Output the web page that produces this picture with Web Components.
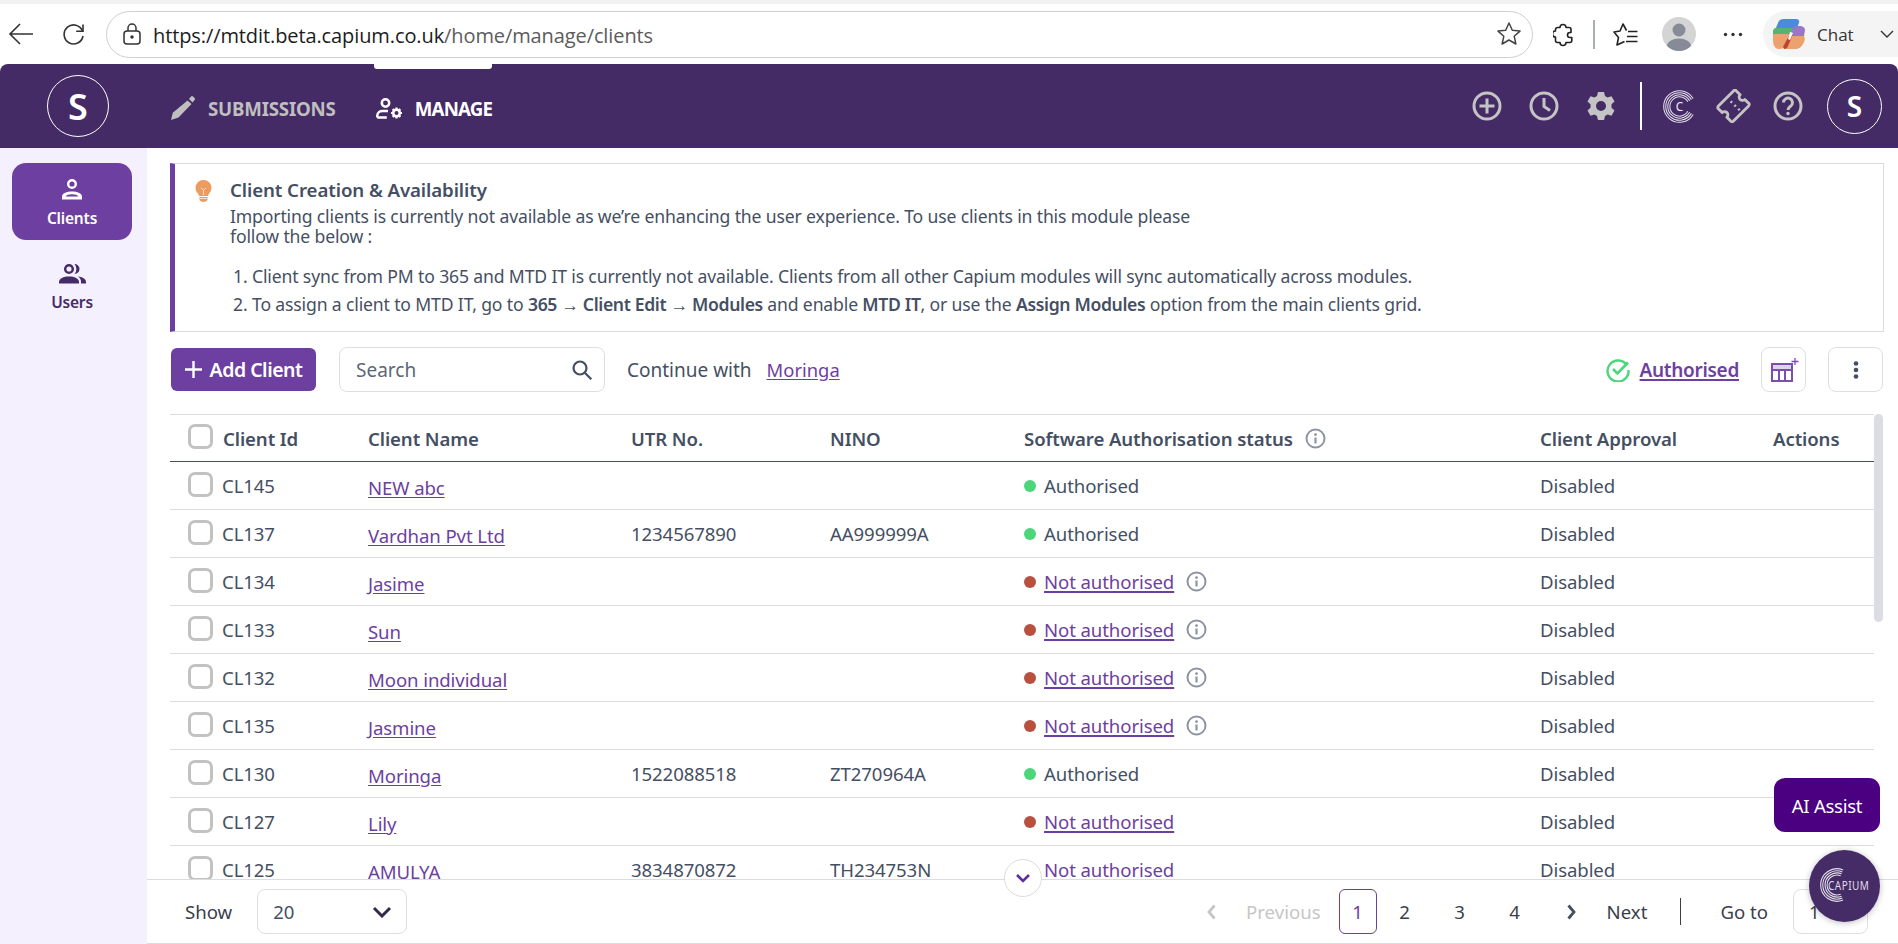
<!DOCTYPE html>
<html lang="en">
<head>
<meta charset="utf-8">
<title>Clients</title>
<style>
  html, body { margin: 0; height: 100%; overflow: hidden; background: #fff; }
  body { font-family: "Noto Sans", "Liberation Sans", sans-serif; color: #454f63; display: flex; flex-direction: column; position: relative; height: 944px; }
</style>
</head>
<body>
<browser-bar></browser-bar>
<app-header></app-header>
<app-main>
  <side-nav slot="side"></side-nav>
  <info-banner></info-banner>
  <client-toolbar></client-toolbar>
  <client-table>
    <client-row cid="CL145" status="ok">NEW abc</client-row>
    <client-row cid="CL137" utr="1234567890" nino="AA999999A" status="ok">Vardhan Pvt Ltd</client-row>
    <client-row cid="CL134" status="no" info>Jasime</client-row>
    <client-row cid="CL133" status="no" info>Sun</client-row>
    <client-row cid="CL132" status="no" info>Moon individual</client-row>
    <client-row cid="CL135" status="no" info>Jasmine</client-row>
    <client-row cid="CL130" utr="1522088518" nino="ZT270964A" status="ok">Moringa</client-row>
    <client-row cid="CL127" status="no">Lily</client-row>
    <client-row cid="CL125" utr="3834870872" nino="TH234753N" status="no">AMULYA</client-row>
  </client-table>
  <pager-bar slot="foot"></pager-bar>
</app-main>
<float-widgets></float-widgets>

<script>
// little shared icons
const infoIcon = `<svg width="21" height="21" viewBox="0 0 21 21" fill="none"><circle cx="10.5" cy="10.5" r="9" stroke="#8d95a5" stroke-width="2"/><circle cx="10.5" cy="6.6" r="1.4" fill="#8d95a5"/><path d="M10.5 9.5v6" stroke="#8d95a5" stroke-width="2.2"/></svg>`;

// concentric open rings of the capium mark, open = half opening of the gap in degrees
function capiumRings(w, h, open, inner) {
  const a = open * Math.PI / 180;
  const d = [23, 20, 17, 14].map(r => {
    const x = (24 + r * Math.cos(a)).toFixed(1);
    return `M${x} ${(24 - r * Math.sin(a)).toFixed(1)}A${r} ${r} 0 1 0 ${x} ${(24 + r * Math.sin(a)).toFixed(1)}`;
  }).join('');
  return `<svg width="${w}" height="${h}" viewBox="0 0 48 48" preserveAspectRatio="xMinYMid meet" fill="none" stroke="#e4e0ea" stroke-width="1.5"><path d="${d}"/>${inner || ''}</svg>`;
}

class BrowserBar extends HTMLElement {
  constructor() {
    super();
    this.attachShadow({ mode: 'open' }).innerHTML = `
    <style>
      :host { display: block; height: 64px; background: #fff; box-sizing: border-box; border-top: 4px solid #f1f1f1; font-family: "Open Sans", "Noto Sans", sans-serif; }
      .bar { display: flex; align-items: center; height: 60px; }
      .nav { display: flex; align-items: center; width: 106px; flex: none; }
      .nav svg:first-child { margin-left: 8px; }
      .nav svg:last-child { margin-left: 28px; }
      .url { flex: none; width: 1427px; height: 47px; box-sizing: border-box; border: 1.5px solid #cfcfcf; border-radius: 24px; display: flex; align-items: center; padding: 0 9px 0 15px; font-size: 20px; color: #5c5c5c; letter-spacing: -.1px; }
      .url span { position: relative; top: 1px; }
      .url b { font-weight: 400; color: #1c1c1c; }
      .url svg:first-child { margin-right: 11px; }
      .url svg:last-child { margin-left: auto; margin-right: 1px; }
      .tools { display: flex; align-items: center; flex: 1; position: relative; height: 47px; }
      .tools > * { position: absolute; }
      .chat { left: 230px; width: 135px; height: 46px; background: #f4f4f4; border-radius: 23px 0 0 23px; display: flex; align-items: center; font-size: 17px; color: #333; box-sizing: border-box; padding-left: 9px; }
      .chat span { margin-left: 11px; }
      .chat svg:last-child { margin-left: 26px; }
    </style>
    <div class="bar">
      <div class="nav">
        <svg width="26" height="24" viewBox="0 0 26 24" fill="none" stroke="#333" stroke-width="1.6"><path d="M25 12H2M12 2L2 12l10 10"/></svg>
        <svg width="24" height="24" viewBox="0 0 24 24" fill="none" stroke="#333" stroke-width="1.6"><path d="M20.5 9A9.5 9.5 0 1 0 21 14"/><path d="M21 2.5V9.3h-6.8"/></svg>
      </div>
      <div class="url">
        <svg width="20" height="24" viewBox="0 0 20 24" fill="none" stroke="#333" stroke-width="1.5"><rect x="2" y="9" width="16" height="13" rx="3"/><path d="M6 9V6a4 4 0 0 1 8 0v3"/><circle cx="10" cy="15" r="1" fill="#333"/></svg>
        <span><b>https://mtdit.beta.capium.co.uk</b>/home/manage/clients</span>
        <svg width="26" height="26" viewBox="0 0 26 26" fill="none" stroke="#444" stroke-width="1.5" stroke-linejoin="round"><path d="M13 2l3.3 7.3 7.7.8-5.8 5.2 1.7 7.7-6.9-4-6.9 4 1.7-7.7L2 10.1l7.7-.8z"/></svg>
      </div>
      <div class="tools">
        <svg style="left:20px;top:11px" width="20" height="25" viewBox="0 0 20 25" fill="none" stroke="#222" stroke-width="1.6" stroke-linejoin="round"><path d="M7 5.5a3 3 0 0 1 6 0h3a2 2 0 0 1 2 2v3h-1a2.4 2.4 0 0 0 0 5h1.800v3a2 2 0 0 1-2 2H13a3 3 0 0 1-6 0H4.500a2 2 0 0 1-2-2v-3.500a3 3 0 0 1 0-6V7.500a2 2 0 0 1 2-2z"/></svg>
        <div style="left:60px;top:9px;width:2px;height:29px;background:#a9adb6"></div>
        <svg style="left:80px;top:12px" width="25" height="24" viewBox="0 0 25 24" fill="none" stroke="#222" stroke-width="1.6" stroke-linejoin="round"><path d="M13.500 7.500L10 1 7 8l-6 1 4.500 5.500L4 22l7.500-3.500"/><path d="M15 8.500h9.500M14 13.500h10.500M13 18.500h11.500"/></svg>
        <svg style="left:129px;top:6px" width="34" height="34" viewBox="0 0 34 34"><clipPath id="av"><circle cx="17" cy="17" r="17"/></clipPath><g clip-path="url(#av)"><rect width="34" height="34" fill="#d4d4d4"/><circle cx="17" cy="13" r="6.500" fill="#868b97"/><ellipse cx="17" cy="29" rx="12" ry="7.500" fill="#868b97"/></g></svg>
        <svg style="left:190px;top:21px" width="20" height="5" viewBox="0 0 20 5" fill="#333"><circle cx="2.500" cy="2.500" r="1.700"/><circle cx="10" cy="2.500" r="1.700"/><circle cx="17.500" cy="2.500" r="1.700"/></svg>
        <div class="chat">
          <svg width="34" height="32" viewBox="0 0 34 32">
            <path d="M6 5Q7 1 12 1h12q4 0 3 4l-3 7H3z" fill="#4a8adf"/>
            <path d="M1 13q.5-3 3-3h19l-3 7H1z" fill="#58b46c"/>
            <path d="M1 16h16l-5 12q-1 3-4 3-4 0-5-2-2-2-2-6z" fill="#eba26e"/>
            <path d="M20 12q1-4 6-4h3q4 1 4 4l-1 6-13 1z" fill="#9877c8"/>
            <path d="M19 18h13q2 3-1 8-2 4-6 5H13z" fill="#eba26e"/>
            <path d="M18 15l3 1-5 12q-1 3-4 3l-1-2z" fill="#b8452f"/>
            <path d="M18 14l3 1-3 7-2-1z" fill="#fff"/>
          </svg>
          <span>Chat</span>
          <svg width="14" height="9" viewBox="0 0 14 9" fill="none" stroke="#333" stroke-width="1.4"><path d="M1 1l6 6 6-6"/></svg>
        </div>
      </div>
    </div>`;
  }
}
customElements.define('browser-bar', BrowserBar);

class AppHeader extends HTMLElement {
  constructor() {
    super();
    this.attachShadow({ mode: 'open' }).innerHTML = `
    <style>
      :host { display: flex; align-items: center; height: 84px; flex: none; background: #452b66; border-radius: 8px 8px 0 0; color: #fff; position: relative; }
      .logo { width: 62px; height: 62px; margin-left: 47px; border: 1.2px solid #fff; border-radius: 50%; box-sizing: border-box; display: flex; align-items: center; justify-content: center; font-size: 36px; font-weight: 600; flex: none; }
      nav { display: flex; align-items: center; margin-left: 61px; font-size: 18.7px; font-weight: 700; letter-spacing: -.2px; }
      .item { display: flex; align-items: center; position: relative; height: 84px; box-sizing: border-box; padding-top: 4px; }
      .item.off { color: #bfbfbf; margin-right: 40px; gap: 13px; }
      .item.on { gap: 12px; letter-spacing: -.8px; }
      .item.on::before { content: ""; position: absolute; left: -2px; right: 0; top: 0; height: 5px; background: #fff; border-radius: 0 0 3px 3px; }
      .right { margin-left: auto; display: flex; align-items: center; margin-right: 16px; }
      .right svg { flex: none; }
      .div { width: 2px; height: 48px; background: #fff; margin: 0 21px 0 24px; }
      .me { width: 55px; height: 55px; margin-left: 24px; border: 1.2px solid #fff; border-radius: 50%; box-sizing: border-box; display: flex; align-items: center; justify-content: center; font-size: 28px; font-weight: 600; }
    </style>
    <div class="logo">S</div>
    <nav>
      <div class="item off">
        <svg width="25" height="24" viewBox="0 0 25 24" fill="#bfbfbf"><path d="M17.500 4.500l4 3.600L8.500 21.500 1 24l1.800-7.200z"/><path d="M19 3l2-2.500q1-.8 2 0l1.600 1.500q.7 1 0 2L22.500 6.500z"/></svg>
        <span>SUBMISSIONS</span>
      </div>
      <div class="item on">
        <svg width="27" height="21" viewBox="0 0 27 21" fill="none"><circle cx="9.500" cy="5" r="3.700" stroke="#fff" stroke-width="2.500"/><path d="M1.300 19.500v-2c0-3 2.700-4.500 5.200-4.500h5.500M1.300 19.500h9.500" stroke="#fff" stroke-width="2.500"/><circle cx="20.500" cy="15" r="3.300" stroke="#fff" stroke-width="2.600"/><path d="M20.500 9.500v2M20.500 18.500v2M15 15h2M24 15h2M16.600 11.100l1.400 1.400M23 17.500l1.400 1.400M16.600 18.900l1.400-1.400M23 12.500l1.400-1.400" stroke="#fff" stroke-width="2.200"/></svg>
        <span>MANAGE</span>
      </div>
    </nav>
    <div class="right">
      <svg width="30" height="30" viewBox="0 0 30 30" fill="none" stroke="#c4c4c4" stroke-width="3" style="margin-right:27px"><circle cx="15" cy="15" r="13"/><path d="M15 7.500v15M7.500 15h15"/></svg>
      <svg width="30" height="30" viewBox="0 0 30 30" fill="none" stroke="#c4c4c4" stroke-width="3" style="margin-right:27px"><circle cx="15" cy="15" r="13"/><path d="M15 7v8.500l6 4"/></svg>
      <svg width="30" height="30" viewBox="0 0 30 30"><path fill="#c4c4c4" fill-rule="evenodd" d="M12 1h6l1 4 2.500 1.400 4-1.200 3 5.200-3 2.900v3.400l3 2.900-3 5.200-4-1.200L19 25l-1 4h-6l-1-4-2.500-1.400-4 1.200-3-5.200 3-2.900v-3.400l-3-2.900 3-5.200 4 1.200L11 5zm3 9a5 5 0 1 0 0 10 5 5 0 0 0 0-10z"/></svg>
      <div class="div"></div>
      ${capiumRings(33, 33, 30, '<text x="24" y="30.500" fill="#f0edf4" stroke="none" font-size="17" text-anchor="middle" font-family="Noto Sans">C</text>')}
      <svg width="35" height="34" viewBox="0 0 36 36" fill="none" stroke="#c4c4c4" stroke-width="3" stroke-linejoin="round" style="margin-left:20px"><path d="M21 2l4 4a3 3 0 0 0 5 5l4 4a2 2 0 0 1 0 3L18 34a2 2 0 0 1-3 0l-4-4a3 3 0 0 0-5-5l-4-4a2 2 0 0 1 0-3L18 2a2 2 0 0 1 3 0z"/><path d="M15 13l1.500 1.500M19 17l1.500 1.500M23 21l1.500 1.500" stroke-width="2.600"/></svg>
      <svg width="30" height="30" viewBox="0 0 30 30" fill="none" stroke="#c4c4c4" stroke-width="3" style="margin-left:22px"><circle cx="15" cy="15" r="13"/><path d="M10.500 11.500a4.500 4.500 0 1 1 7 3.800c-1.500 1-2.500 1.700-2.500 3.700"/><circle cx="15" cy="22.500" r="1.700" fill="#c4c4c4" stroke="none"/></svg>
      <div class="me">S</div>
    </div>`;
  }
}
customElements.define('app-header', AppHeader);

class AppMain extends HTMLElement {
  constructor() {
    super();
    this.attachShadow({ mode: 'open' }).innerHTML = `
    <style>
      :host { display: flex; flex: 1; min-height: 0; }
      .col { flex: 1; min-width: 0; display: flex; flex-direction: column; }
      .up { flex: 1; min-height: 0; overflow: hidden; padding: 15px 14px 0 23px; position: relative; display: flex; flex-direction: column; }
    </style>
    <slot name="side"></slot>
    <div class="col">
      <div class="up"><slot></slot></div>
      <slot name="foot"></slot>
    </div>`;
  }
}
customElements.define('app-main', AppMain);

class SideNav extends HTMLElement {
  constructor() {
    super();
    this.attachShadow({ mode: 'open' }).innerHTML = `
    <style>
      :host { display: block; width: 147px; flex: none; background: #f4f0fe; padding: 15px 15px 0 12px; box-sizing: border-box; font-size: 15.5px; font-weight: 600; color: #452c67; letter-spacing: -.2px; }
      .btn { height: 77px; border-radius: 14px; display: flex; flex-direction: column; align-items: center; padding-top: 16px; box-sizing: border-box; gap: 7px; }
      .btn.on { background: #6d3fa0; color: #fff; }
      .btn + .btn { margin-top: 7px; }
    </style>
    <div class="btn on">
      <svg width="22" height="21" viewBox="0 0 22 21" fill="none"><circle cx="11" cy="5" r="3.800" stroke="#fff" stroke-width="2.400"/><path d="M1 20.500v-3c0-3 4.500-5 10-5s10 2 10 5v3zM4 18h14" fill="#fff"/><path d="M4.500 17.500c1-1.300 3.500-2.200 6.500-2.200s5.500.9 6.500 2.200z" fill="#6d3fa0"/></svg>
      <span>Clients</span>
    </div>
    <div class="btn">
      <svg width="28" height="21" viewBox="0 0 28 21" fill="#452c67"><circle cx="11" cy="6" r="3.800" fill="none" stroke="#452c67" stroke-width="2.500"/><path d="M16.500 1a5 5 0 0 1 0 10 7.500 7.500 0 0 0 0-10z"/><path d="M1 20.500v-1.500c0-3.500 4.500-5.500 10-5.500s10 2 10 5.500v1.500z"/><path d="M20 13.500c4 .3 8 2.300 8 5.500v1.500h-5v-2c0-2-1.200-3.700-3-5z"/></svg>
      <span>Users</span>
    </div>`;
  }
}
customElements.define('side-nav', SideNav);

class InfoBanner extends HTMLElement {
  constructor() {
    super();
    this.attachShadow({ mode: 'open' }).innerHTML = `
    <style>
      :host { display: flex; flex: none; height: 169px; box-sizing: border-box; border: 1px solid #dcdcdc; border-left: 5px solid #6d3fa0; font-size: 17.6px; line-height: 20px; color: #454f63; letter-spacing: -.15px; }
      .ico { width: 55px; flex: none; padding: 16px 0 0 20px; box-sizing: border-box; }
      h4 { margin: 15px 0 5px; font-size: 18.7px; line-height: 22px; font-weight: 600; letter-spacing: -.1px; }
      p { margin: 0; }
      ol { margin: 16px 0 0; padding: 0 0 0 22px; }
      li { line-height: 28px; }
      b { font-weight: 600; letter-spacing: -.35px; }
    </style>
    <div class="ico">
      <svg width="17" height="22" viewBox="0 0 17 22" fill="#ec9c60"><path d="M8.500 0a8 8 0 0 1 8 8c0 3-1.800 4.500-3 6.500-.3.800-.5 1.200-.5 1.500H4c0-.3-.2-.7-.5-1.500C2.300 12.500.5 11 .5 8a8 8 0 0 1 8-8zM4.500 17h8v2.500c0 1.500-2 2.500-4 2.500s-4-1-4-2.500z"/><path d="M6 8l2.500 2L11 8M8.500 10v5M5 18.500h7" fill="none" stroke="#fbe3cf" stroke-width=".9"/></svg>
    </div>
    <div>
      <h4>Client Creation &amp; Availability</h4>
      <p>Importing clients is currently not available as we’re enhancing the user experience. To use clients in this module please<br>follow the below :</p>
      <ol>
        <li>Client sync from PM to 365 and MTD IT is currently not available. Clients from all other Capium modules will sync automatically across modules.</li>
        <li>To assign a client to MTD IT, go to <b>365 → Client Edit → Modules</b> and enable <b>MTD IT</b>, or use the <b>Assign Modules</b> option from the main clients grid.</li>
      </ol>
    </div>`;
  }
}
customElements.define('info-banner', InfoBanner);

class ClientToolbar extends HTMLElement {
  constructor() {
    super();
    this.attachShadow({ mode: 'open' }).innerHTML = `
    <style>
      :host { display: flex; align-items: center; flex: none; height: 45px; margin-top: 15px; font-size: 19px; color: #454f63; }
      .add { width: 145px; height: 43px; margin-left: 1px; background: #6d3fa0; color: #fff; border-radius: 6px; display: flex; align-items: center; justify-content: center; gap: 8px; font-weight: 600; font-size: 19.5px; letter-spacing: -.5px; box-sizing: border-box; }
      .search { width: 266px; height: 45px; margin-left: 23px; border: 1px solid #dedee6; border-radius: 8px; box-sizing: border-box; display: flex; align-items: center; justify-content: space-between; padding: 0 11px 0 16px; color: #5d6678; }
      .cont { margin-left: 22px; }
      a { color: #6d3fa0; text-decoration: underline; text-underline-offset: 2px; }
      .mor { margin-left: 15px; font-size: 18.4px; }
      .auth { margin-left: auto; display: flex; align-items: center; gap: 10px; margin-right: 22px; font-weight: 600; }
      .auth a { text-decoration-thickness: 2px; letter-spacing: -.3px; }
      .sq { width: 45px; height: 45px; border: 1px solid #dedee6; border-radius: 8px; box-sizing: border-box; display: flex; align-items: center; justify-content: center; }
      .sq.k { width: 55px; margin-left: 22px; margin-right: 1px; }
    </style>
    <div class="add"><svg width="17" height="17" viewBox="0 0 17 17" stroke="#fff" stroke-width="2.400"><path d="M8.500 0v17M0 8.500h17"/></svg><span>Add Client</span></div>
    <div class="search"><span>Search</span><svg width="22" height="22" viewBox="0 0 22 22" fill="none" stroke="#454f63" stroke-width="2.200"><circle cx="9" cy="9" r="6.500"/><path d="M13.800 13.800l6.500 6.500"/></svg></div>
    <span class="cont">Continue with</span>
    <a class="mor">Moringa</a>
    <div class="auth">
      <svg width="24" height="24" viewBox="0 0 24 24" fill="none" stroke="#4bd67c" stroke-width="2.400"><path d="M21 7.500A10.500 10.500 0 1 0 22.500 12"/><path d="M7 11l4.500 4.500L22 4.500" stroke-width="2.600"/></svg>
      <a>Authorised</a>
    </div>
    <div class="sq"><svg width="30" height="26" viewBox="0 0 30 26" fill="none" stroke="#7a4fb0" stroke-width="2"><path d="M3 7h20v17H3zM3 13h20M10 13v11M16 13v11"/><path d="M3 7h20v6H3z" fill="#7a4fb0" fill-opacity=".25"/><path d="M26 1v7M22.500 4.500h7" stroke-width="1.300"/></svg></div>
    <div class="sq k"><svg width="6" height="18" viewBox="0 0 6 18" fill="#454f63"><circle cx="3" cy="2.500" r="2.300"/><circle cx="3" cy="9" r="2.300"/><circle cx="3" cy="15.500" r="2.300"/></svg></div>`;
  }
}
customElements.define('client-toolbar', ClientToolbar);

const COLS = '198px 263px 199px 194px 516px 233px 1fr';

class ClientTable extends HTMLElement {
  constructor() {
    super();
    this.attachShadow({ mode: 'open' }).innerHTML = `
    <style>
      :host { display: block; flex: 1; min-height: 0; margin-top: 22px; position: relative; overflow: hidden; }
      .head { display: grid; grid-template-columns: ${COLS}; height: 48px; box-sizing: border-box; border-top: 1px solid #dcdcdc; border-bottom: 1.5px solid #454f63; align-items: center; font-weight: 600; color: #454f63; width: 1704px; font-size: 18.6px; letter-spacing: -.1px; }
      .first { display: flex; align-items: center; padding-left: 18px; gap: 10px; }
      .box { width: 25px; height: 25px; border: 3px solid #c2c2c2; border-radius: 7px; box-sizing: border-box; margin-top: -3px; flex: none; }
      .st { display: flex; align-items: center; gap: 12px; }
      .body { width: 1704px; }
      .bar { position: absolute; right: 1px; top: 0; width: 9px; height: 208px; background: #dcdde4; border-radius: 5px; }
    </style>
    <div class="head">
      <div class="first"><div class="box"></div><span>Client Id</span></div>
      <span>Client Name</span><span>UTR No.</span><span>NINO</span>
      <div class="st"><span>Software Authorisation status</span>${infoIcon}</div>
      <span>Client Approval</span><span>Actions</span>
    </div>
    <div class="body"><slot></slot></div>
    <div class="bar"></div>`;
  }
}
customElements.define('client-table', ClientTable);

class ClientRow extends HTMLElement {
  connectedCallback() {
    if (this.shadowRoot) return;
    const ok = this.getAttribute('status') === 'ok';
    const info = this.hasAttribute('info');
    this.attachShadow({ mode: 'open' }).innerHTML = `
    <style>
      :host { display: grid; grid-template-columns: ${COLS}; height: 48px; box-sizing: border-box; border-bottom: 1px solid #dcdcdc; align-items: center; font-size: 18.6px; color: #454f63; letter-spacing: -.1px; }
      .first { display: flex; align-items: center; padding-left: 18px; gap: 9px; }
      .box { width: 25px; height: 25px; border: 3px solid #c2c2c2; border-radius: 7px; box-sizing: border-box; margin-top: -3px; flex: none; }
      a { color: #6d3fa0; text-decoration: underline; text-underline-offset: 2px; position: relative; top: 1.5px; justify-self: start; }
      .st { display: flex; align-items: center; }
      i { width: 12px; height: 12px; border-radius: 50%; margin-right: 8px; background: ${ok ? '#4bd67c' : '#b84f3f'}; flex: none; }
      .st a { top: 0; text-decoration-thickness: 1.5px; }
      svg { margin-left: 12px; }
    </style>
    <div class="first"><div class="box"></div><span>${this.getAttribute('cid')}</span></div>
    <a><slot></slot></a>
    <span>${this.getAttribute('utr') || ''}</span>
    <span>${this.getAttribute('nino') || ''}</span>
    <div class="st"><i></i>${ok ? '<span>Authorised</span>' : '<a>Not authorised</a>'}${info ? infoIcon : ''}</div>
    <span>Disabled</span>
    <span></span>`;
  }
}
customElements.define('client-row', ClientRow);

class PagerBar extends HTMLElement {
  constructor() {
    super();
    this.attachShadow({ mode: 'open' }).innerHTML = `
    <style>
      :host { display: flex; align-items: center; flex: none; height: 65px; box-sizing: border-box; border-top: 1px solid #dcdcdc; border-bottom: 1px solid #dcdcdc; font-size: 18.6px; color: #3a3f4c; padding-left: 38px; }
      .sel { width: 150px; height: 45px; margin-left: 25px; border: 1px solid #dedee6; border-radius: 8px; box-sizing: border-box; display: flex; align-items: center; justify-content: space-between; padding: 0 14px 0 15px; color: #454f63; }
      .pg { margin-left: auto; display: flex; align-items: center; margin-right: 30px; }
      .n { width: 38px; height: 45px; border-radius: 6px; box-sizing: border-box; display: flex; align-items: center; justify-content: center; margin-right: 17px; }
      .n.cur { border: 1px solid #6d3fa0; color: #6d3fa0; margin-right: 9px; }
      .prev { color: #c6c6c6; margin: 0 18px 0 30px; }
      .next { margin-left: 31px; }
      .dv { width: 1px; height: 27px; background: #3a3f4c; margin: 0 39px 0 33px; }
      .go { width: 75px; height: 45px; margin-left: 25px; border: 1px solid #dedee6; border-radius: 8px; box-sizing: border-box; display: flex; align-items: center; padding-left: 15px; }
    </style>
    <span>Show</span>
    <div class="sel"><span>20</span><svg width="20" height="12" viewBox="0 0 20 12" fill="none" stroke="#342a4e" stroke-width="3"><path d="M2 2l8 8 8-8"/></svg></div>
    <div class="pg">
      <svg width="9" height="16" viewBox="0 0 9 16" fill="none" stroke="#c6c6c6" stroke-width="2.800"><path d="M7.500 1.500L2 8l5.500 6.500"/></svg>
      <span class="prev">Previous</span>
      <div class="n cur">1</div><div class="n">2</div><div class="n">3</div><div class="n" style="margin-right:33px">4</div>
      <svg width="9" height="16" viewBox="0 0 9 16" fill="none" stroke="#454f63" stroke-width="2.800"><path d="M1.500 1.500L7 8l-5.500 6.500"/></svg>
      <span class="next">Next</span>
      <div class="dv"></div>
      <span>Go to</span>
      <div class="go">1</div>
    </div>`;
  }
}
customElements.define('pager-bar', PagerBar);

// things floating over the page
class FloatWidgets extends HTMLElement {
  constructor() {
    super();
    this.attachShadow({ mode: 'open' }).innerHTML = `
    <style>
      :host { display: contents; }
      .ai { position: absolute; left: 1774px; top: 778px; width: 106px; height: 54px; border-radius: 11px; background: #4b0082; color: #fff; display: flex; align-items: center; justify-content: center; font-size: 18.6px; letter-spacing: -.3px; }
      .cap { position: absolute; left: 1809px; top: 850px; width: 71px; height: 72px; border-radius: 50%; background: #452c67; box-shadow: 0 1px 6px rgba(0,0,0,.25); color: #e0dce6; font-size: 12.5px; letter-spacing: .6px; overflow: hidden; }
      .cap svg { position: absolute; left: 11px; top: 18px; }
      .cap span { position: absolute; left: 19px; top: 27px; line-height: 17px; transform: scaleX(.8); transform-origin: left center; }
      .down { position: absolute; left: 1004px; top: 859px; width: 38px; height: 38px; border-radius: 50%; background: #fff; border: 1px solid #dcdcdc; box-sizing: border-box; display: flex; align-items: center; justify-content: center; }
    </style>
    <div class="down"><svg width="16" height="10" viewBox="0 0 16 10" fill="none" stroke="#5e2ea0" stroke-width="2.600"><path d="M2 2l6 6 6-6"/></svg></div>
    <div class="ai">AI Assist</div>
    <div class="cap">${capiumRings(34, 34, 68)}<span>CAPIUM</span></div>`;
  }
}
customElements.define('float-widgets', FloatWidgets);
</script>
</body>
</html>
